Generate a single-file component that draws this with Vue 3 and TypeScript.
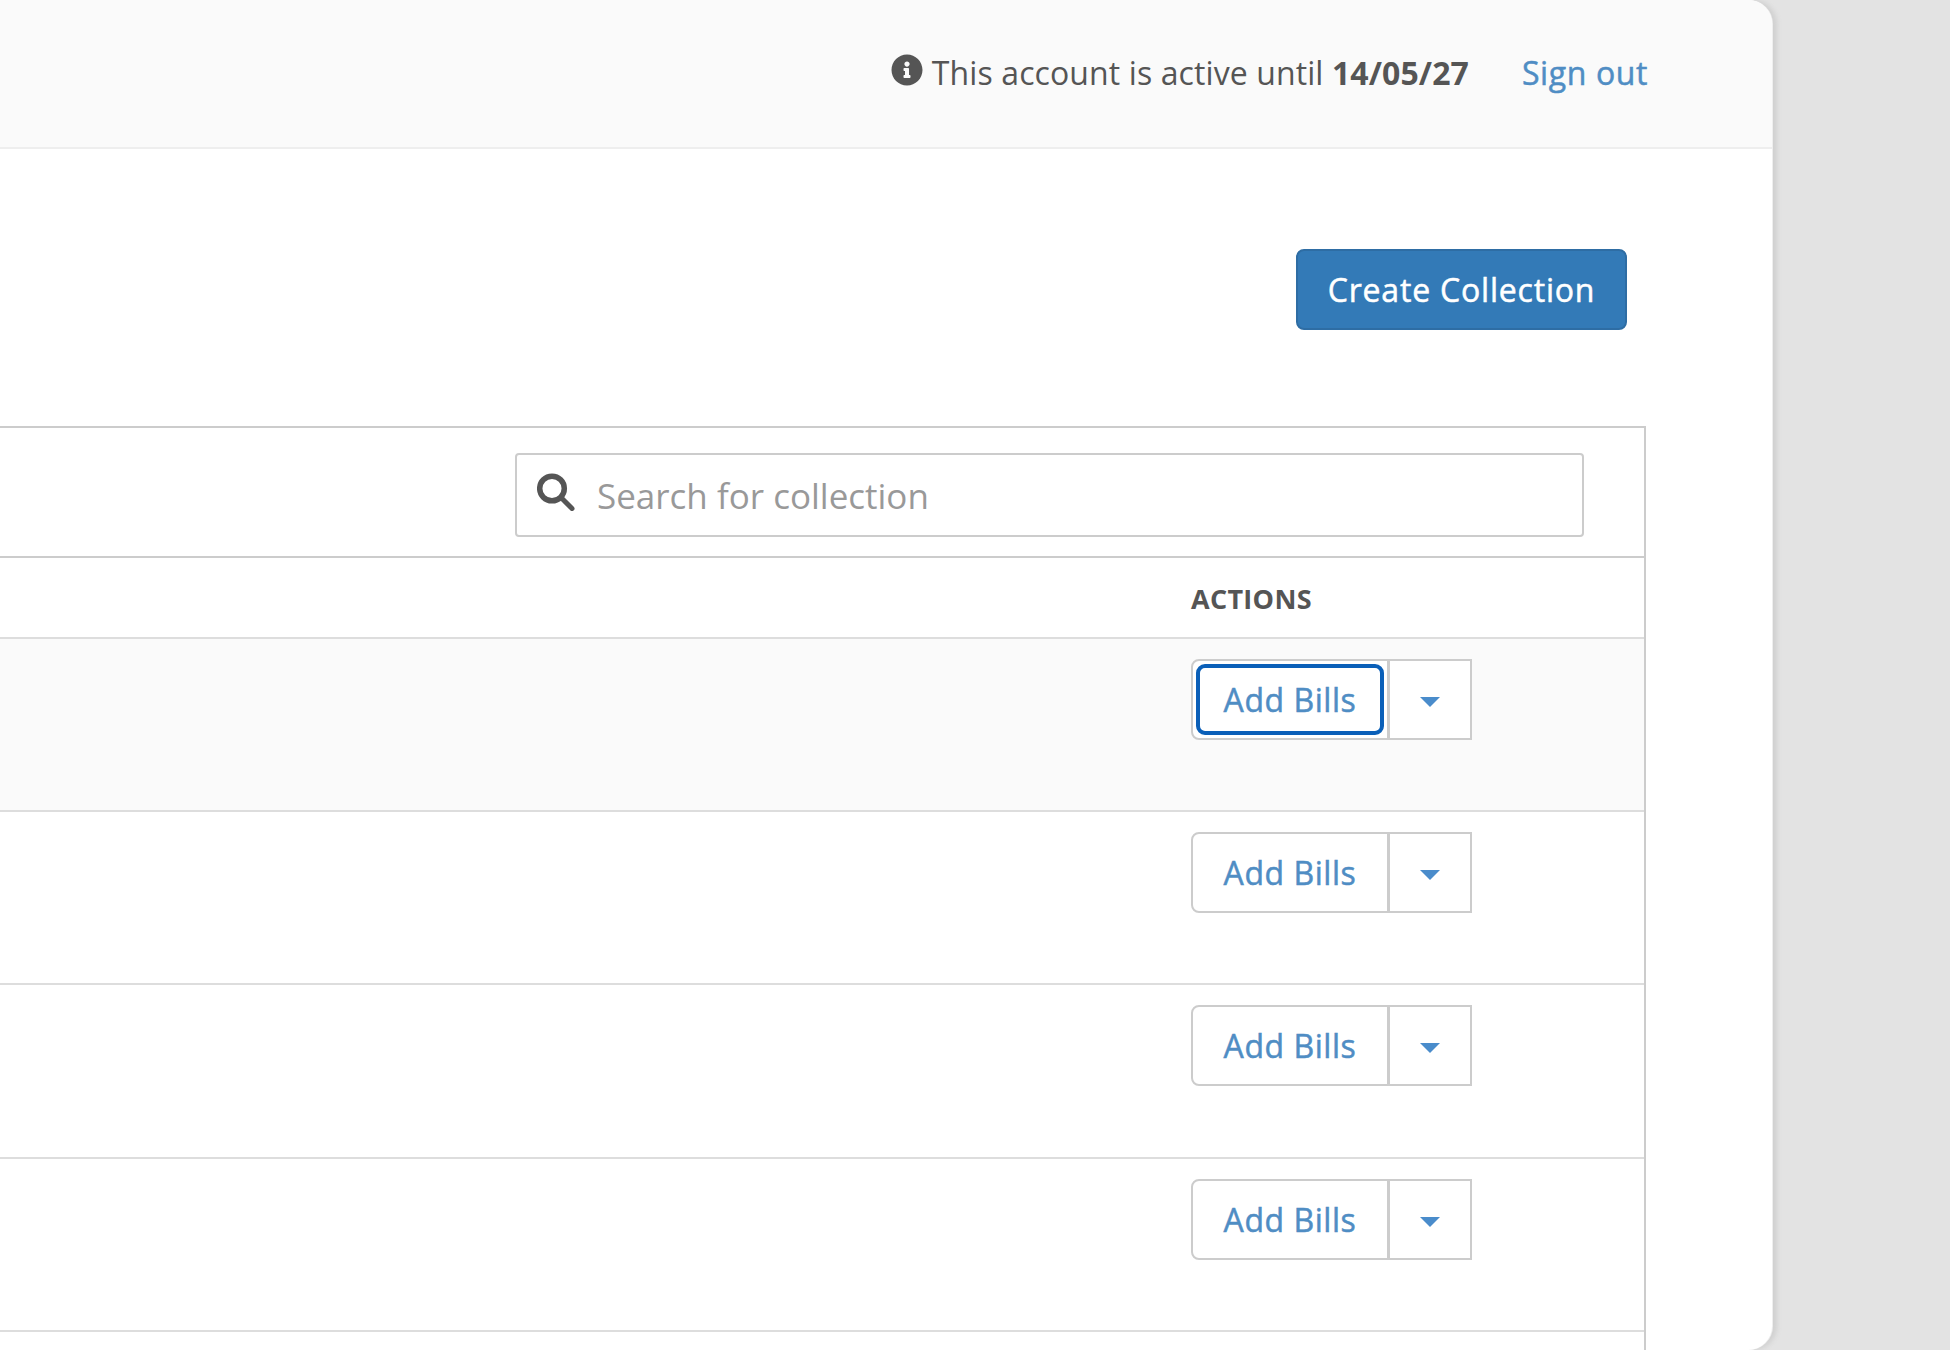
<script setup lang="ts">
const rows = [
  { id: 1, focused: true },
  { id: 2, focused: false },
  { id: 3, focused: false },
  { id: 4, focused: false }
]
</script>

<template>
  <div class="page">
    <div class="card">
      <header class="topbar">
        <div class="status">
          <svg class="info-icon" viewBox="0 0 512 512" aria-hidden="true">
            <path d="M256 8C119.043 8 8 119.083 8 256c0 136.997 111.043 248 248 248s248-111.003 248-248C504 119.083 392.957 8 256 8zm0 110c23.196 0 42 18.804 42 42s-18.804 42-42 42-42-18.804-42-42 18.804-42 42-42zm56 254c0 6.627-5.373 12-12 12h-88c-6.627 0-12-5.373-12-12v-24c0-6.627 5.373-12 12-12h12v-64h-12c-6.627 0-12-5.373-12-12v-24c0-6.627 5.373-12 12-12h64c6.627 0 12 5.373 12 12v100h12c6.627 0 12 5.373 12 12v24z" />
          </svg>
          <span>This account is active until <strong>14/05/27</strong></span>
        </div>
        <a class="sign-out" href="#">Sign out</a>
      </header>

      <main class="content">
        <div class="toolbar">
          <button class="create-btn" type="button">Create Collection</button>
        </div>

        <section class="panel">
          <div class="panel-search">
            <label class="search">
              <svg class="search-icon" viewBox="0 0 38 38" aria-hidden="true">
                <circle cx="15" cy="15.5" r="12.3" />
                <line x1="24" y1="24.5" x2="35" y2="35.5" />
              </svg>
              <input type="text" placeholder="Search for collection" />
            </label>
          </div>

          <div class="table-head">
            <div class="col-actions">ACTIONS</div>
          </div>

          <div v-for="row in rows" :key="row.id" class="table-row" :class="{ highlighted: row.focused }">
            <div class="col-actions">
              <div class="btn-group">
                <button class="btn-main" :class="{ focused: row.focused }" type="button">Add Bills</button>
                <button class="btn-caret" type="button" aria-label="More"><span class="caret"></span></button>
              </div>
            </div>
          </div>
        </section>
      </main>
    </div>
  </div>
</template>

<style>
html,
body {
  margin: 0;
  background: #e3e3e3;
}
</style>

<style scoped>
.page {
  width: 1950px;
  height: 1350px;
  overflow: hidden;
  background: #e3e3e3;
  font-family: "Open Sans", "Liberation Sans", sans-serif;
  color: #555;
}

.card {
  box-sizing: border-box;
  display: flex;
  flex-direction: column;
  width: 1802px;
  height: 1350px;
  margin-left: -30px;
  overflow: hidden;
  background: #fff;
  border-radius: 24px;
  box-shadow: 1px 0 0 #eee, 5px 0 5px #d0d0d0;
}

/* Top bar */
.topbar {
  box-sizing: border-box;
  display: flex;
  flex: none;
  align-items: center;
  justify-content: flex-end;
  gap: 53px;
  height: 149px;
  padding: 0 124px 3px 0;
  background: #fafafa;
  border-bottom: 2px solid #eee;
  font-size: 32px;
}

.status {
  display: flex;
  align-items: center;
  gap: 9px;
  letter-spacing: 0.1px;
}

.info-icon {
  width: 32px;
  height: 32px;
  margin-top: -5px;
  fill: #555;
}

.status strong {
  font-weight: 700;
}

.sign-out {
  color: #4f8dc4;
  -webkit-text-stroke: 0.5px #4f8dc4;
  letter-spacing: 0.6px;
  text-decoration: none;
}

/* Create button */
.content {
  display: flex;
  flex: 1;
  flex-direction: column;
  min-height: 0;
}

.toolbar {
  display: flex;
  justify-content: flex-end;
  padding: 100px 145px 96px 0;
}

.create-btn {
  box-sizing: border-box;
  width: 331px;
  height: 81px;
  padding: 0 0 1px;
  color: #fff;
  background: #337ab7;
  border: 2px solid #2e6da4;
  border-radius: 8px;
  font: 32px "Open Sans", sans-serif;
  -webkit-text-stroke: 0.5px #fff;
  letter-spacing: 0.8px;
}

/* Panel */
.panel {
  flex: 1;
  margin: 0 126px 0 -20px;
  border: 2px solid #ccc;
  border-bottom: 0;
}

.panel-search {
  display: flex;
  justify-content: flex-end;
  padding: 25px 60px 19px 0;
  border-bottom: 2px solid #ccc;
}

.search {
  box-sizing: border-box;
  display: flex;
  align-items: center;
  gap: 22px;
  width: 1069px;
  height: 84px;
  padding: 0 20px;
  border: 2px solid #ccc;
  border-radius: 4px;
}

.search-icon {
  width: 38px;
  height: 38px;
  margin-top: -7px;
  flex: none;
  fill: none;
  stroke: #555;
}

.search-icon circle {
  stroke-width: 5.5;
}

.search-icon line {
  stroke-width: 5;
  stroke-linecap: round;
}

.search input {
  flex: 1;
  min-width: 0;
  padding: 0;
  border: 0;
  outline: 0;
  background: none;
  color: #555;
  font: 35px "Open Sans", sans-serif;
}

.search input::placeholder {
  color: #999;
  opacity: 1;
}

.table-head,
.table-row {
  display: flex;
  justify-content: flex-end;
  border-bottom: 2px solid #ddd;
}

.table-head {
  box-sizing: border-box;
  height: 81px;
  padding-top: 23px;
  font-size: 27px;
  font-weight: 700;
  letter-spacing: 0.3px;
  line-height: 36px;
}

.table-row {
  box-sizing: border-box;
  height: 173.2px;
  padding-top: 20px;
}

.table-row.highlighted {
  background: #fafafa;
}

.col-actions {
  box-sizing: border-box;
  width: 453px;
}

/* Split button */
.btn-group {
  display: flex;
  width: 282px;
  height: 81px;
}

.btn-main,
.btn-caret {
  box-sizing: border-box;
  height: 100%;
  padding: 0;
  background: #fff;
  border: 2px solid #ccc;
  color: #4f8dc4;
  font: 32px "Open Sans", sans-serif;
  letter-spacing: 0.55px;
}

.btn-main {
  position: relative;
  width: 198px;
  -webkit-text-stroke: 0.5px #4f8dc4;
  border-radius: 8px 0 0 8px;
}

.btn-main.focused::after {
  content: "";
  position: absolute;
  inset: 3px 3px 3px;
  border: 4px solid #0a5fb8;
  border-radius: 9px;
}

.btn-caret {
  width: 84px;
  margin-left: -1px;
  display: flex;
  align-items: center;
  justify-content: center;
}

.caret {
  width: 0;
  height: 0;
  margin-top: 5px;
  border-left: 10px solid transparent;
  border-right: 10px solid transparent;
  border-top: 10px solid #4a8ccb;
}
</style>
